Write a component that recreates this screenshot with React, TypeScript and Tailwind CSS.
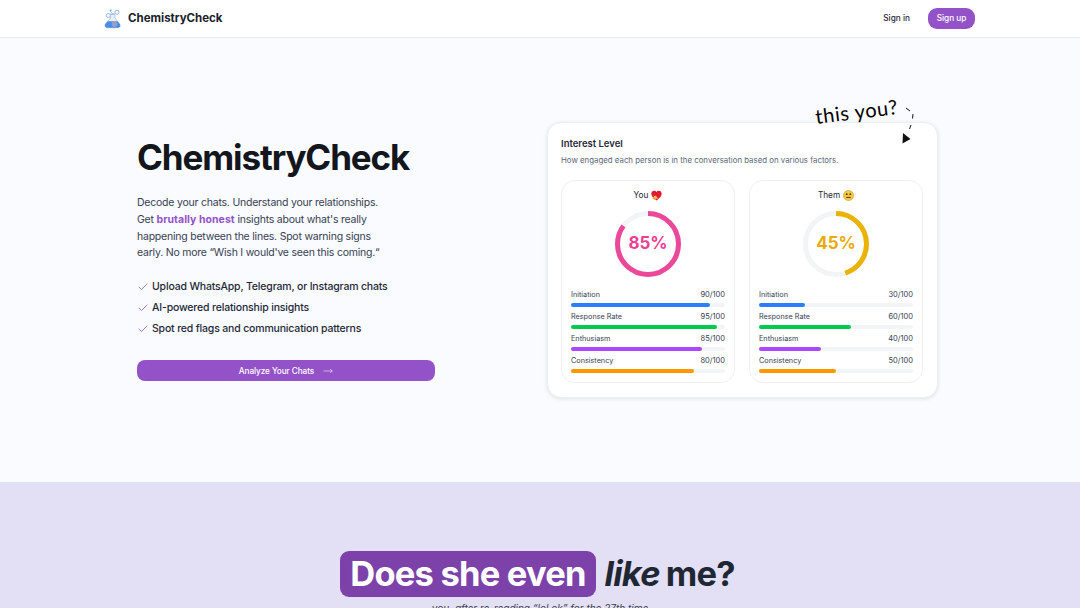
import { Check, MoveRight } from "lucide-react";

const font = { fontFamily: "Inter, sans-serif" };

function Logo() {
  return (
    <svg width="18" height="20" viewBox="0 0 18 20" fill="none">
      <path d="M6.5 5.5v3.5L1.5 15c-1.2 1.8 0 3.8 2 3.8h10c2 0 3.2-2 2-3.8L11 9V5.5z" fill="#e8eff9" stroke="#9db8dc" strokeWidth="0.7" />
      <path d="M3.6 12.2 1.2 15.3c-1 1.7.2 3.5 2.3 3.5h10.2c2 0 3.2-1.8 2.2-3.5l-2.2-3.1z" fill="#4a8ce6" />
      <circle cx="10.5" cy="15" r="2.9" fill="#9a9ccf" />
      <circle cx="4.3" cy="6.5" r="2" fill="#fff" stroke="#8fb2e0" strokeWidth="0.9" />
      <circle cx="13" cy="3.2" r="2.1" fill="#fff" stroke="#8fb2e0" strokeWidth="0.9" />
      <circle cx="6.6" cy="1.5" r="1" fill="#6aa0e8" />
      <path d="M5.7 5.3 11.2 4.1M8.2 4.6l-1-2" stroke="#8fb2e0" strokeWidth="0.7" />
    </svg>
  );
}

function Heart() {
  return (
    <svg width="11" height="11" viewBox="0 0 11 11">
      <path d="M5.5 10.4C2 7.8.3 6 .3 3.8.3 2 1.7.8 3.1.8c1 0 1.9.5 2.4 1.4C6 1.3 6.9.8 7.9.8c1.4 0 2.8 1.2 2.8 3 0 2.2-1.7 4-5.2 6.6z" fill="#e01b2f" />
      <path d="M1.2 8.3 4.4 5.4l2.2 1.9-2.6 2.6z" fill="#f2a93b" />
      <path d="M2.8 6 6.6 8.7" stroke="#f9d98b" strokeWidth="1" />
    </svg>
  );
}

function Neutral() {
  return (
    <svg width="11" height="11" viewBox="0 0 11 11">
      <circle cx="5.5" cy="5.5" r="5.1" fill="#f6c83f" stroke="#b98a24" strokeWidth="0.5" />
      <circle cx="3.7" cy="4.2" r="0.85" fill="#3f2c12" />
      <circle cx="7.3" cy="4.2" r="0.85" fill="#3f2c12" />
      <path d="M3.2 7.4h4.6" stroke="#3f2c12" strokeWidth="0.9" />
    </svg>
  );
}

function Ring({ pct, color }: { pct: number; color: string }) {
  const r = 30.5;
  const c = 2 * Math.PI * r;
  return (
    <svg width="66" height="66" viewBox="0 0 66 66" className="-rotate-90">
      <circle cx="33" cy="33" r={r} fill="none" stroke="#f3f4f6" strokeWidth="5" />
      <circle cx="33" cy="33" r={r} fill="none" stroke={color} strokeWidth="5" strokeDasharray={`${(c * pct) / 100} ${c}`} />
    </svg>
  );
}

const barColors = ["bg-[#2b7fff]", "bg-[#00c950]", "bg-[#ad46ff]", "bg-[#ff9800]"];
const labels = ["Initiation", "Response Rate", "Enthusiasm", "Consistency"];

function Person({ name, emoji, pct, color, textClass, values }: { name: string; emoji: React.ReactNode; pct: number; color: string; textClass: string; values: number[] }) {
  return (
    <div className="flex-1 rounded-[14px] border border-[#eeeff3] bg-white px-[9px] pt-[8px] h-[203px]">
      <div className="flex items-center justify-center gap-[3px] text-[8.25px] leading-[12px] text-[#1f2937] h-[12px]">
        {name} {emoji}
      </div>
      <div className="relative mx-auto mt-[10px] h-[66px] w-[66px]">
        <Ring pct={pct} color={color} />
        <div className={`absolute inset-0 flex items-center justify-center text-[17px] font-bold ${textClass}`}>{pct}%</div>
      </div>
      <div className="mt-[13px] flex flex-col">
        {labels.map((l, i) => (
          <div key={l} className="h-[22px]">
            <div className="flex justify-between text-[7.25px] leading-[10px] text-[#374151] h-[10px] items-center">
              <span>{l}</span>
              <span className="text-[7.5px]">{values[i]}/100</span>
            </div>
            <div className="mt-[3px] h-[3.5px] w-full rounded-full bg-[#f3f4f6]">
              <div className={`h-full rounded-full ${barColors[i]}`} style={{ width: `${values[i]}%` }} />
            </div>
          </div>
        ))}
      </div>
    </div>
  );
}

export default function App() {
  return (
    <div style={font} className="h-[608px] w-[1080px] overflow-hidden bg-[#fafbff] text-[#111827]">
      <header className="flex h-[38px] items-center justify-between border-b border-[#ebecf0] bg-white pl-[104px] pr-[105px]">
        <div className="flex items-center gap-[6px]">
          <Logo />
          <span className="text-[11.5px] font-bold text-[#1a202c]">ChemistryCheck</span>
        </div>
        <div className="flex items-center gap-[18px]">
          <span className="text-[8.25px] font-medium text-[#1f2937]">Sign in</span>
          <span className="flex h-[21px] w-[47px] items-center justify-center rounded-[9px] bg-[#9452c8] text-[8.25px] font-medium text-white">Sign up</span>
        </div>
      </header>

      <section className="flex h-[444px] items-start pl-[137px]">
        <div className="w-[298px] pt-[98px]">
          <h1 className="text-[35px] leading-[42px] font-bold tracking-[-1.1px] text-[#13161c]">ChemistryCheck</h1>
          <p className="mt-[17px] text-[10.5px] leading-[16.8px] tracking-[-0.22px] text-[#374151]">
            Decode your chats. Understand your relationships.
            <br />
            Get <span className="font-bold tracking-[0.05px] text-[#9452c8]">brutally honest</span> insights about what's really
            <br />
            happening between the lines. Spot warning signs
            <br />
            early. No more “Wish I would've seen this coming.“
          </p>
          <ul className="mt-[17px] flex flex-col gap-[5px] text-[10.5px] leading-[16px] tracking-[-0.17px] font-medium text-[#1f2937]">
            {["Upload WhatsApp, Telegram, or Instagram chats", "AI-powered relationship insights", "Spot red flags and communication patterns"].map((t) => (
              <li key={t} className="flex items-center gap-[3px]">
                <Check size={12} strokeWidth={1.6} className="text-[#9452c8]" />
                {t}
              </li>
            ))}
          </ul>
          <button className="mt-[23px] flex h-[21px] w-full items-center justify-center gap-[9px] rounded-[8px] bg-[#9452c8] text-[8.25px] tracking-[-0.1px] font-medium text-white">
            Analyze Your Chats
            <MoveRight size={10} strokeWidth={1.3} />
          </button>
        </div>

        <div className="relative ml-[112px] mt-[84px] h-[276px] w-[391px] rounded-[14px] border border-[#eceef2] bg-white pl-[13px] pr-[14px] pt-[13px] shadow-[0_1px_4px_rgba(0,0,0,0.1)]">
          <h2 className="mt-[1px] text-[9.5px] leading-[14px] font-semibold text-[#1f2937]">Interest Level</h2>
          <p className="mt-[3px] text-[7.85px] leading-[12px] text-[#5b6678]">How engaged each person is in the conversation based on various factors.</p>
          <div className="mt-[14px] flex gap-[14px]">
            <Person name="You" emoji={<Heart />} pct={85} color="#ec4899" textClass="text-[#ec3f94]" values={[90, 95, 85, 80]} />
            <Person name="Them" emoji={<Neutral />} pct={45} color="#eab308" textClass="text-[#eaaa08]" values={[30, 60, 40, 50]} />
          </div>
          <div className="absolute left-[267px] top-[-24px] -rotate-[7deg] text-[20px] leading-[24px] tracking-[0.6px] text-black" style={{ fontFamily: "Lato, cursive" }}>this you?</div>
          <svg className="absolute left-[351px] top-[-22px]" width="20" height="46" viewBox="0 0 20 46" fill="none">
            <path d="M7 7 11 10M14 13l-.5 4.5M12 24l-1.5 4" stroke="#111" strokeWidth="1" />
            <path d="M4 32 11.5 38 3.5 42.5z" fill="#111" />
          </svg>
        </div>
      </section>

      <section className="h-[126px] bg-[#e3e0f6] bg-[radial-gradient(#dfdbf3_0.6px,transparent_0.7px)] bg-[length:4px_4px] pt-[69px]">
        <div className="flex items-center justify-center gap-[9px] pr-[5px] text-[34.5px] leading-[42px] font-bold tracking-[-0.8px] text-[#1f2733]">
          <span className="flex h-[46px] items-center rounded-[9px] bg-[#7c42a9] px-[10px] text-white">Does she even</span>
          <span className="flex gap-[6px]"><em className="font-bold">like</em> me?</span>
        </div>
        <p className="mt-[3px] text-center text-[10px] leading-[16px] italic text-[#374151]">you, after re-reading “lol ok” for the 27th time</p>
      </section>
    </div>
  );
}
